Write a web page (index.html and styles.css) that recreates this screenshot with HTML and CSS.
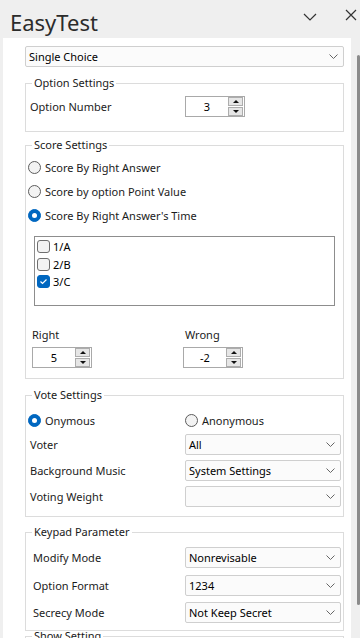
FILE: index.html
```html
<!DOCTYPE html>
<html lang="en">
<head>
  <meta charset="UTF-8" />
  <meta name="viewport" content="width=device-width, initial-scale=1" />
  <title>EasyTest</title>
  <link rel="stylesheet" href="styles.css">
</head>
<body>

  <header class="titlebar">
    <h1 class="app-title">EasyTest</h1>
    <div class="title-actions">
      <svg class="icon-collapse" width="14" height="8" viewBox="0 0 14 8"><path d="M1 1 L7 7 L13 1" fill="none" stroke="#333" stroke-width="1.2"/></svg>
      <svg class="icon-close" width="12" height="12" viewBox="0 0 12 12"><path d="M1 1 L11 11 M11 1 L1 11" fill="none" stroke="#333" stroke-width="1.2"/></svg>
    </div>
  </header>

  <div class="frame">
    <main class="panel">

      <div class="combo">
        <span>Single Choice</span>
        <svg class="chev" width="9" height="5" viewBox="0 0 9 5"><path d="M0.5 0.5 L4.5 4.5 L8.5 0.5" fill="none" stroke="#666" stroke-width="1"/></svg>
      </div>

      <fieldset class="group group-option">
        <legend>Option Settings</legend>
        <div class="field-row">
          <span class="field-label">Option Number</span>
          <div class="spin">
            <span class="spin-value">3</span>
            <div class="spin-btns"><span class="spin-btn up"></span><span class="spin-btn down"></span></div>
          </div>
        </div>
      </fieldset>

      <fieldset class="group group-score">
        <legend>Score Settings</legend>
        <div class="radio-list">
          <label class="radio-row"><span class="radio"></span>Score By Right Answer</label>
          <label class="radio-row"><span class="radio"></span>Score by option Point Value</label>
          <label class="radio-row"><span class="radio on"></span>Score By Right Answer's Time</label>
        </div>
        <div class="listbox">
          <div class="list-item"><span class="check"></span>1/A</div>
          <div class="list-item"><span class="check"></span>2/B</div>
          <div class="list-item"><span class="check on"><svg width="11" height="11" viewBox="0 0 11 11"><path d="M2.5 5.5 L4.5 7.5 L8.5 3.5" fill="none" stroke="#fff" stroke-width="1.2"/></svg></span>3/C</div>
        </div>
        <div class="score-values">
          <div class="score-col">
            <span class="score-label">Right</span>
            <div class="spin">
              <span class="spin-value">5</span>
              <div class="spin-btns"><span class="spin-btn up"></span><span class="spin-btn down"></span></div>
            </div>
          </div>
          <div class="score-col">
            <span class="score-label wrong">Wrong</span>
            <div class="spin">
              <span class="spin-value">-2</span>
              <div class="spin-btns"><span class="spin-btn up"></span><span class="spin-btn down"></span></div>
            </div>
          </div>
        </div>
      </fieldset>

      <fieldset class="group group-vote">
        <legend>Vote Settings</legend>
        <div class="vote-choice">
          <label class="radio-row"><span class="radio on"></span>Onymous</label>
          <label class="radio-row"><span class="radio"></span>Anonymous</label>
        </div>
        <div class="field-rows">
          <div class="field-row">
            <span class="field-label">Voter</span>
            <div class="combo"><span>All</span><svg class="chev" width="9" height="5" viewBox="0 0 9 5"><path d="M0.5 0.5 L4.5 4.5 L8.5 0.5" fill="none" stroke="#666" stroke-width="1"/></svg></div>
          </div>
          <div class="field-row">
            <span class="field-label">Background Music</span>
            <div class="combo"><span>System Settings</span><svg class="chev" width="9" height="5" viewBox="0 0 9 5"><path d="M0.5 0.5 L4.5 4.5 L8.5 0.5" fill="none" stroke="#666" stroke-width="1"/></svg></div>
          </div>
          <div class="field-row">
            <span class="field-label">Voting Weight</span>
            <div class="combo"><span></span><svg class="chev" width="9" height="5" viewBox="0 0 9 5"><path d="M0.5 0.5 L4.5 4.5 L8.5 0.5" fill="none" stroke="#666" stroke-width="1"/></svg></div>
          </div>
        </div>
      </fieldset>

      <fieldset class="group group-keypad">
        <legend>Keypad Parameter</legend>
        <div class="field-rows">
          <div class="field-row">
            <span class="field-label">Modify Mode</span>
            <div class="combo"><span>Nonrevisable</span><svg class="chev" width="9" height="5" viewBox="0 0 9 5"><path d="M0.5 0.5 L4.5 4.5 L8.5 0.5" fill="none" stroke="#666" stroke-width="1"/></svg></div>
          </div>
          <div class="field-row">
            <span class="field-label">Option Format</span>
            <div class="combo"><span>1234</span><svg class="chev" width="9" height="5" viewBox="0 0 9 5"><path d="M0.5 0.5 L4.5 4.5 L8.5 0.5" fill="none" stroke="#666" stroke-width="1"/></svg></div>
          </div>
          <div class="field-row">
            <span class="field-label">Secrecy Mode</span>
            <div class="combo"><span>Not Keep Secret</span><svg class="chev" width="9" height="5" viewBox="0 0 9 5"><path d="M0.5 0.5 L4.5 4.5 L8.5 0.5" fill="none" stroke="#666" stroke-width="1"/></svg></div>
          </div>
        </div>
      </fieldset>

      <fieldset class="group group-show">
        <legend>Show Setting</legend>
        <div class="field-rows"></div>
      </fieldset>

    </main>
    <div class="scrollbar"><div class="thumb"></div></div>
  </div>

</body>
</html>
```

FILE: styles.css
```css
* {
  box-sizing: border-box;
  margin: 0;
  padding: 0;
}

body {
  font-family: 'Noto Sans', sans-serif;
  font-size: 11px;
  color: #1b1b1b;
  background: #efefef;
  width: 360px;
  height: 638px;
  overflow: hidden;
}

/* title bar */
.titlebar {
  height: 38px;
  display: flex;
  justify-content: space-between;
  align-items: flex-start;
}

.app-title {
  font-weight: 400;
  font-size: 22px;
  line-height: 28px;
  padding: 8px 0 0 10px;
  color: #2b2b2b;
}

.title-actions {
  display: flex;
  align-items: flex-start;
  gap: 28px;
  padding: 9px 3px 0 0;
}

.icon-collapse {
  margin-top: 4px;
}

/* panel + scrollbar */
.frame {
  display: flex;
  height: 600px;
}

.panel {
  width: 348px;
  margin-left: 3px;
  background: #fff;
  padding: 8px 7px 0 22px;
  display: flex;
  flex-direction: column;
  overflow: hidden;
}

.scrollbar {
  width: 9px;
  display: flex;
  justify-content: flex-end;
  padding-top: 17px;
}

.thumb {
  width: 3px;
  height: 550px;
  background: #8b8b8b;
  border-radius: 2px;
}

/* combo box */
.combo {
  height: 21px;
  flex-shrink: 0;
  border: 1px solid #cfcfcf;
  border-radius: 2px;
  background: #fbfbfb;
  display: flex;
  align-items: center;
  justify-content: space-between;
  padding: 0 5px 0 3px;
  color: #000;
}

.chev {
  flex-shrink: 0;
}

/* group boxes */
.group {
  border: 1px solid #dcdcdc;
  padding: 0 2px;
  min-width: 0;
  flex-shrink: 0;
}

.group legend {
  margin-left: 4px;
  padding: 0 2px;
  line-height: 16px;
  color: #1a1a1a;
}

.group-option {
  margin-top: 8px;
  padding-top: 5px;
  padding-bottom: 14px;
}

.group-score {
  margin-top: 5px;
  padding-top: 2px;
  padding-bottom: 10px;
}

.group-vote {
  margin-top: 8px;
  padding-top: 5px;
  padding-bottom: 9px;
}

.group-keypad {
  margin-top: 7px;
  padding-top: 7px;
  padding-bottom: 7px;
}

.group-show {
  margin-top: -3px;
  padding-bottom: 20px;
}

/* rows */
.field-row {
  display: grid;
  grid-template-columns: 157px 1fr;
  align-items: center;
}

.field-label {
  padding-left: 2px;
}

.group-keypad .field-label {
  padding-left: 5px;
}

.field-rows {
  display: flex;
  flex-direction: column;
  gap: 5px;
  margin-top: 2px;
}

.group-keypad .field-rows {
  gap: 6.5px;
  margin-top: 0;
}

/* radios */
.radio-row {
  height: 24px;
  display: flex;
  align-items: center;
  gap: 4px;
}

.radio {
  width: 13px;
  height: 13px;
  border-radius: 50%;
  border: 1px solid #5c5c5c;
  background: #f3f3f3;
  flex-shrink: 0;
}

.radio.on {
  background: #0067c0;
  border-color: #0067c0;
}

.radio.on::after {
  content: '';
  display: block;
  width: 5px;
  height: 5px;
  margin: 3px;
  border-radius: 50%;
  background: #fff;
}

.vote-choice {
  display: grid;
  grid-template-columns: 157px 1fr;
}

/* list with checkboxes */
.listbox {
  margin: 9px 6px 0 6px;
  height: 70px;
  border: 1px solid #8d8d8d;
  padding: 1px 0 0 2px;
}

.list-item {
  height: 17.5px;
  display: flex;
  align-items: center;
  gap: 3px;
  color: #000;
}

.check {
  width: 13px;
  height: 13px;
  border: 1px solid #6f6f6f;
  border-radius: 3px;
  background: #f3f3f3;
  display: flex;
}

.check.on {
  background: #0067c0;
  border-color: #0067c0;
}

/* right / wrong */
.score-values {
  margin-top: 21px;
  padding-left: 4px;
  display: grid;
  grid-template-columns: 151px 1fr;
}

.score-col {
  display: flex;
  flex-direction: column;
  align-items: flex-start;
  gap: 4px;
}

.score-label {
  line-height: 16px;
}

.score-label.wrong {
  padding-left: 2px;
}

/* spin box */
.spin {
  width: 60px;
  height: 21px;
  border: 1px solid #a9a9a9;
  background: #fff;
  display: flex;
}

.spin-value {
  flex: 1;
  text-align: center;
  line-height: 19px;
  color: #000;
}

.spin-btns {
  width: 16px;
  display: flex;
  flex-direction: column;
  gap: 1px;
  padding: 0 1px 0 0;
}

.spin-btn {
  flex: 1;
  background: #e6e6e6;
  border: 1px solid #adadad;
  display: flex;
  align-items: center;
  justify-content: center;
}

.spin-btn::after {
  content: '';
  border-left: 3px solid transparent;
  border-right: 3px solid transparent;
}

.spin-btn.up::after {
  border-bottom: 3px solid #111;
}

.spin-btn.down::after {
  border-top: 3px solid #111;
}
```
